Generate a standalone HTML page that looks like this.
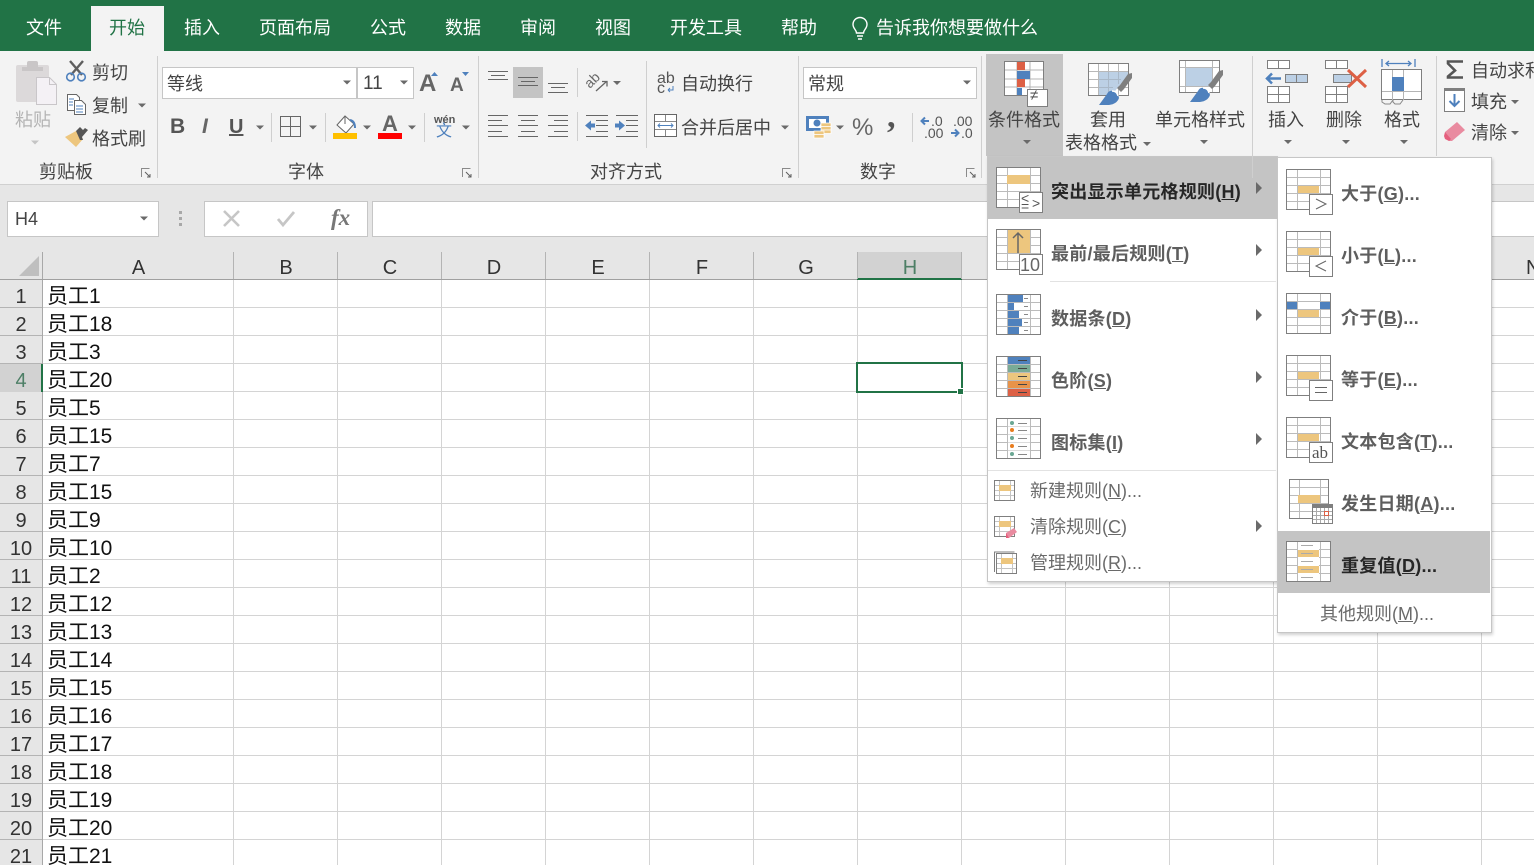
<!DOCTYPE html>
<html lang="zh"><head><meta charset="utf-8"><title>Excel</title>
<style>
html,body{margin:0;padding:0;width:1534px;height:865px;overflow:hidden;background:#fff}
body{position:relative;font-family:"Liberation Sans","Noto Sans CJK SC",sans-serif;color:#444}
.b{position:absolute}
.t{position:absolute;white-space:nowrap;line-height:24px;height:24px;font-size:18px;color:#444}
.w{color:#fff}
.m{font-weight:700;color:#5e5e5e;letter-spacing:.25px}
.s{color:#6a6a6a}
.r{width:42px;left:0;text-align:center;font-size:20px;color:#333}
.a{left:47px;font-size:21px;color:#111}
.h{top:255px;font-size:20px;color:#333;text-align:center}
svg{position:absolute;left:0;top:0}
</style></head><body>
<div class="b" style="left:0;top:0;width:1534px;height:51px;background:#217346"></div>
<div class="b" style="left:91px;top:6px;width:73px;height:45px;background:#f3f3f3"></div>
<div class="b" style="left:0;top:51px;width:1534px;height:133px;background:#f3f3f3"></div>
<div class="b" style="left:0;top:184px;width:1534px;height:96px;background:#e6e6e6;border-top:1px solid #d0d0d0;box-sizing:border-box"></div>
<div class="b" style="left:986px;top:54px;width:77px;height:102px;background:#c4c4c4"></div>
<div class="b" style="left:513px;top:67px;width:30px;height:31px;background:#c4c4c4"></div>
<div class="b" style="left:162px;top:67px;width:195px;height:32px;background:#fff;border:1px solid #c6c6c6;box-sizing:border-box"></div>
<div class="b" style="left:357px;top:67px;width:57px;height:32px;background:#fff;border:1px solid #c6c6c6;box-sizing:border-box"></div>
<div class="b" style="left:803px;top:67px;width:174px;height:32px;background:#fff;border:1px solid #c6c6c6;box-sizing:border-box"></div>
<div class="b" style="left:7px;top:201px;width:152px;height:36px;background:#fff;border:1px solid #c6c6c6;box-sizing:border-box"></div>
<div class="b" style="left:204px;top:201px;width:164px;height:36px;background:#fff;border:1px solid #c6c6c6;box-sizing:border-box"></div>
<div class="b" style="left:372px;top:201px;width:1170px;height:36px;background:#fff;border:1px solid #c6c6c6;box-sizing:border-box"></div>
<div class="b" style="left:857px;top:252px;width:104px;height:28px;background:#d2d2d2"></div>
<div class="b" style="left:0;top:364px;width:42px;height:28px;background:#d2d2d2"></div>
<div class="b" style="left:42px;top:280px;width:1492px;height:585px;background-color:#fff;background-image:repeating-linear-gradient(to bottom,transparent 0,transparent 27px,#d4d4d4 27px,#d4d4d4 28px)"></div>
<div class="b" style="left:233px;top:280px;width:1px;height:585px;background:#d4d4d4"></div>
<div class="b" style="left:337px;top:280px;width:1px;height:585px;background:#d4d4d4"></div>
<div class="b" style="left:441px;top:280px;width:1px;height:585px;background:#d4d4d4"></div>
<div class="b" style="left:545px;top:280px;width:1px;height:585px;background:#d4d4d4"></div>
<div class="b" style="left:649px;top:280px;width:1px;height:585px;background:#d4d4d4"></div>
<div class="b" style="left:753px;top:280px;width:1px;height:585px;background:#d4d4d4"></div>
<div class="b" style="left:857px;top:280px;width:1px;height:585px;background:#d4d4d4"></div>
<div class="b" style="left:961px;top:280px;width:1px;height:585px;background:#d4d4d4"></div>
<div class="b" style="left:1065px;top:280px;width:1px;height:585px;background:#d4d4d4"></div>
<div class="b" style="left:1169px;top:280px;width:1px;height:585px;background:#d4d4d4"></div>
<div class="b" style="left:1273px;top:280px;width:1px;height:585px;background:#d4d4d4"></div>
<div class="b" style="left:1377px;top:280px;width:1px;height:585px;background:#d4d4d4"></div>
<div class="b" style="left:1481px;top:280px;width:1px;height:585px;background:#d4d4d4"></div>
<div class="b" style="left:0;top:280px;width:42px;height:84px;background:#e6e6e6;background-image:repeating-linear-gradient(to bottom,transparent 0,transparent 27px,#b4b4b4 27px,#b4b4b4 28px)"></div>
<div class="b" style="left:0;top:392px;width:42px;height:473px;background:#e6e6e6;background-image:repeating-linear-gradient(to bottom,transparent 0,transparent 27px,#b4b4b4 27px,#b4b4b4 28px)"></div>
<div class="b" style="left:42px;top:252px;width:1px;height:613px;background:#a8a8a8"></div>
<div class="b" style="left:41px;top:364px;width:2px;height:28px;background:#217346"></div>
<div class="b" style="left:0;top:279px;width:1534px;height:1px;background:#a0a0a0"></div>
<div class="b" style="left:857px;top:278px;width:105px;height:2px;background:#217346"></div>
<div class="b" style="left:233px;top:252px;width:1px;height:27px;background:#b4b4b4"></div>
<div class="b" style="left:337px;top:252px;width:1px;height:27px;background:#b4b4b4"></div>
<div class="b" style="left:441px;top:252px;width:1px;height:27px;background:#b4b4b4"></div>
<div class="b" style="left:545px;top:252px;width:1px;height:27px;background:#b4b4b4"></div>
<div class="b" style="left:649px;top:252px;width:1px;height:27px;background:#b4b4b4"></div>
<div class="b" style="left:753px;top:252px;width:1px;height:27px;background:#b4b4b4"></div>
<div class="b" style="left:857px;top:252px;width:1px;height:27px;background:#b4b4b4"></div>
<div class="b" style="left:961px;top:252px;width:1px;height:27px;background:#b4b4b4"></div>
<div class="b" style="left:1065px;top:252px;width:1px;height:27px;background:#b4b4b4"></div>
<div class="b" style="left:1169px;top:252px;width:1px;height:27px;background:#b4b4b4"></div>
<div class="b" style="left:1273px;top:252px;width:1px;height:27px;background:#b4b4b4"></div>
<div class="b" style="left:1377px;top:252px;width:1px;height:27px;background:#b4b4b4"></div>
<div class="b" style="left:1481px;top:252px;width:1px;height:27px;background:#b4b4b4"></div>
<div class="b" style="left:856px;top:362px;width:107px;height:31px;border:2px solid #217346;box-sizing:border-box"></div>
<div class="b" style="left:957px;top:388px;background:#217346;border:1px solid #fff;width:5px;height:5px"></div>

<div class="b" style="left:0;top:1px;width:1534px;height:864px">
<div class="t h" style="left:43px;width:191px">A</div>
<div class="t h" style="left:234px;width:104px">B</div>
<div class="t h" style="left:338px;width:104px">C</div>
<div class="t h" style="left:442px;width:104px">D</div>
<div class="t h" style="left:546px;width:104px">E</div>
<div class="t h" style="left:650px;width:104px">F</div>
<div class="t h" style="left:754px;width:104px">G</div>
<div class="t h" style="left:858px;width:104px;color:#4d7f66">H</div>
<div class="t h" style="left:1526px">N</div>
<div class="t r" style="top:284px">1</div><div class="t a" style="top:284px">员工1</div>
<div class="t r" style="top:312px">2</div><div class="t a" style="top:312px">员工18</div>
<div class="t r" style="top:340px">3</div><div class="t a" style="top:340px">员工3</div>
<div class="t r" style="top:368px;color:#4d7f66">4</div><div class="t a" style="top:368px">员工20</div>
<div class="t r" style="top:396px">5</div><div class="t a" style="top:396px">员工5</div>
<div class="t r" style="top:424px">6</div><div class="t a" style="top:424px">员工15</div>
<div class="t r" style="top:452px">7</div><div class="t a" style="top:452px">员工7</div>
<div class="t r" style="top:480px">8</div><div class="t a" style="top:480px">员工15</div>
<div class="t r" style="top:508px">9</div><div class="t a" style="top:508px">员工9</div>
<div class="t r" style="top:536px">10</div><div class="t a" style="top:536px">员工10</div>
<div class="t r" style="top:564px">11</div><div class="t a" style="top:564px">员工2</div>
<div class="t r" style="top:592px">12</div><div class="t a" style="top:592px">员工12</div>
<div class="t r" style="top:620px">13</div><div class="t a" style="top:620px">员工13</div>
<div class="t r" style="top:648px">14</div><div class="t a" style="top:648px">员工14</div>
<div class="t r" style="top:676px">15</div><div class="t a" style="top:676px">员工15</div>
<div class="t r" style="top:704px">16</div><div class="t a" style="top:704px">员工16</div>
<div class="t r" style="top:732px">17</div><div class="t a" style="top:732px">员工17</div>
<div class="t r" style="top:760px">18</div><div class="t a" style="top:760px">员工18</div>
<div class="t r" style="top:788px">19</div><div class="t a" style="top:788px">员工19</div>
<div class="t r" style="top:816px">20</div><div class="t a" style="top:816px">员工20</div>
<div class="t r" style="top:844px">21</div><div class="t a" style="top:844px">员工21</div>
</div>

<div class="b" style="left:987px;top:156px;width:291px;height:426px;background:#fff;border:1px solid #c6c6c6;box-sizing:border-box;box-shadow:1px 2px 3px rgba(0,0,0,.18)"></div>
<div class="b" style="left:1277px;top:157px;width:215px;height:476px;background:#fff;border:1px solid #c6c6c6;box-sizing:border-box;box-shadow:1px 2px 3px rgba(0,0,0,.18)"></div>
<div class="b" style="left:988px;top:157px;width:289px;height:62px;background:#c4c4c4"></div>
<div class="b" style="left:1278px;top:531px;width:212px;height:62px;background:#c4c4c4"></div>
<div class="b" style="left:1050px;top:281px;width:226px;height:1px;background:#e2e2e2"></div>
<div class="b" style="left:988px;top:470px;width:288px;height:1px;background:#e2e2e2"></div>

<svg width="1534" height="865" viewBox="0 0 1534 865" fill="none">
<defs>
<symbol id="tb" width="46" height="42" viewBox="0 0 46 42"><rect x=".5" y=".5" width="44" height="40" fill="#fff"/><path d="M11.500 0v41M34.500 0v41M0 8.500h45M0 16.500h45M0 24.500h45M0 32.500h45" stroke="#bbb"/><rect x=".5" y=".5" width="44" height="40" stroke="#7f7f7f"/></symbol>
<symbol id="sm" width="22" height="21" viewBox="0 0 22 21"><rect x=".5" y=".5" width="20" height="20" fill="#fff" stroke="#7f7f7f"/><path d="M5.500 1v19M16.500 1v19M1 5.500h19M1 10.500h19M1 15.500h19" stroke="#c4c4c4"/><rect x="5" y="5" width="12" height="6" fill="#edc67e"/></symbol>
<g id="brush"><path d="M1132 73l-4 1-8 11-3 3 4 4 3-3 8-11z" fill="#7f7f7f"/><path d="M1119 98q-1-6-6-7q-4-1-6 3l-8 11h10q8-1 10-7z" fill="#4f81bd"/><path d="M1112 91q5 0 6 5" stroke="#fff" stroke-width="1.400"/></g>
</defs>
<!-- ribbon separators -->
<path d="M157.500 56v122M478.500 56v122M798.500 56v122M981.500 56v122M1252.500 56v122M1436.500 56v100M271.500 113v29M325.500 113v29M424.500 113v29M577.500 68v29M577.500 112v29M646.500 61v87M912.500 113v29" stroke="#cfcfcf"/>
<!-- clipboard -->
<rect x="16" y="65" width="33" height="37" rx="2" fill="#dcd9da"/><rect x="27" y="61" width="11" height="8" rx="2" fill="#c9c6c7"/><rect x="22" y="67" width="21" height="4" fill="#c9c6c7"/>
<path d="M36.500 77.500h13l7 7v20h-20z" fill="#f4f1f5" stroke="#c9c6c9"/><path d="M49.500 77.500v7h7" stroke="#c9c6c9"/>
<!-- scissors -->
<path d="M70 61l12 14M83 61L71 75" stroke="#5f5f5f" stroke-width="2.400"/><circle cx="70.500" cy="77" r="3.800" stroke="#4f81bd" stroke-width="1.600"/><circle cx="81.500" cy="77" r="3.800" stroke="#4f81bd" stroke-width="1.600"/>
<!-- copy -->
<path d="M67.500 94.500h9l3 3v13h-12z" fill="#fff" stroke="#666"/><path d="M74.500 100.500h7l4 4v10h-11z" fill="#fff" stroke="#666"/><path d="M69 99h5M69 102h4M69 105h4M76 106h7M76 109h7M76 112h7" stroke="#4f81bd"/>
<!-- painter -->
<path d="M65 137l11-6 7 8-7 8z" fill="#edc67e"/><path d="M76 131l4-4 3 3-1 1 3-3 3 2-6 7 1 3-3 0z" fill="#555"/>
<!-- arrows -->
<g fill="#6a6a6a">
<path d="M138 103.500h8l-4 4z"/><path d="M343 80.500h8l-4 4z"/><path d="M400 80.500h8l-4 4z"/>
<path d="M256 125.500h8l-4 4z"/><path d="M309 125.500h8l-4 4z"/><path d="M363 125.500h8l-4 4z"/><path d="M408 125.500h8l-4 4z"/><path d="M462 125.500h8l-4 4z"/>
<path d="M613 81h8l-4 4z"/><path d="M781 125.500h8l-4 4z"/><path d="M963 80.500h8l-4 4z"/><path d="M836 125.500h8l-4 4z"/>
<path d="M1023 140h8l-4 4z"/><path d="M1143 142h8l-4 4z"/><path d="M1200 140h8l-4 4z"/><path d="M1284 140h8l-4 4z"/><path d="M1342 140h8l-4 4z"/><path d="M1400 140h8l-4 4z"/>
<path d="M1511 100h8l-4 4z"/><path d="M1511 131h8l-4 4z"/><path d="M140 216.500h8l-4 4z"/>
</g>
<path d="M31 140.500h8l-4 4z" fill="#c4c4c4"/>
<path d="M431 76h7l-3.500-4z" fill="#4f81bd"/><path d="M462 72h7l-3.500 4z" fill="#4f81bd"/>
<!-- launchers -->
<g stroke="#8a8a8a"><path d="M141.500 177v-8.500h8"/><path d="M462.500 177v-8.500h8"/><path d="M782.500 177v-8.500h8"/><path d="M966.500 177v-8.500h8"/></g>
<g stroke="#5f5f5f"><path d="M145 172l5 5m0-3v3h-3"/><path d="M466 172l5 5m0-3v3h-3"/><path d="M786 172l5 5m0-3v3h-3"/><path d="M970 172l5 5m0-3v3h-3"/></g>
<!-- borders -->
<path d="M280.500 116.500h20v20h-20zM290.500 117v19M281 126.500h19" stroke="#666"/>
<!-- fill -->
<path d="M345 116l-8 9 9 8 8-9z" fill="#fff" stroke="#666"/><path d="M345 116v8" stroke="#666"/><path d="M350 120q5 1 5 8" stroke="#4f81bd" stroke-width="2"/>
<rect x="333" y="133" width="24" height="6" fill="#ffc000"/><rect x="378" y="133" width="24" height="6" fill="#f00"/>
<!-- align -->
<g stroke="#666">
<path d="M488 71.500h20M491 75.500h14M488 79.500h20"/><path d="M518 77.500h20M521 81.500h14M518 85.500h20"/><path d="M548 83.500h20M551 87.500h14M548 92.500h20"/>
<path d="M488 115.500h20M488 120.500h14M488 125.500h20M488 131.500h14M488 136.500h20"/>
<path d="M518 115.500h20M521 120.500h14M518 125.500h20M521 131.500h14M518 136.500h20"/>
<path d="M548 115.500h20M554 120.500h14M548 125.500h20M554 131.500h14M548 136.500h20"/>
<path d="M586 115.500h22M596 120.500h12M596 125.500h12M596 131.500h12M586 136.500h22"/>
<path d="M616 115.500h22M626 120.500h12M626 125.500h12M626 131.500h12M616 136.500h22"/>
</g>
<path d="M585 125.500l6-5v3h4v4h-4v3z" fill="#4f81bd"/><path d="M625 125.500l-6-5v3h-4v4h4v3z" fill="#4f81bd"/>
<path d="M596 91l10-9M602 81.500h5v5" stroke="#666" stroke-width="1.300"/>
<path d="M668 90h5v-4M668 90l2-2m-2 2l2 2" stroke="#4f81bd"/>
<!-- merge -->
<rect x="654.500" y="114.500" width="22" height="22" stroke="#666" fill="#fff"/><path d="M655 121.500h21M655 129.500h21M665.500 115v6M665.500 130v6" stroke="#888"/><path d="M658 125.500h15M660 123.500l-2 2 2 2M671 123.500l2 2-2 2" stroke="#4f81bd"/>
<!-- currency -->
<rect x="806" y="116" width="23" height="15" fill="#4f81bd"/><rect x="809" y="119" width="17" height="9" fill="#fff"/><circle cx="817" cy="123" r="3.500" fill="#4f81bd"/>
<g fill="#edc67e" stroke="#fff" stroke-width=".7"><rect x="821" y="123" width="10" height="3.500"/><rect x="821" y="126.500" width="10" height="3.500"/><rect x="821" y="130" width="10" height="3.500"/><rect x="814" y="131" width="10" height="3.500"/><rect x="814" y="134.500" width="10" height="3.500"/></g>
<!-- decimal arrows -->
<path d="M921 121h8m-4-3.500l-3.500 3.500 3.500 3.500" stroke="#4f81bd" stroke-width="2"/><path d="M951 133h8m-4-3.500l3.500 3.500-3.500 3.500" stroke="#4f81bd" stroke-width="2"/>
<!-- cond format -->
<rect x="1004.500" y="61.500" width="39" height="34" fill="#fff"/><path d="M1017 62v34M1030 62v34M1005 70h38M1005 79h38M1005 87h38" stroke="#b4b4b4"/>
<rect x="1017" y="62" width="8" height="8" fill="#dd6045"/><rect x="1017" y="71" width="13" height="8" fill="#4f81bd"/><rect x="1017" y="79" width="8" height="8" fill="#dd6045"/><rect x="1017" y="88" width="5" height="8" fill="#4f81bd"/>
<rect x="1004.500" y="61.500" width="39" height="34" stroke="#7f7f7f"/>
<rect x="1027.500" y="89.500" width="20" height="17" fill="#fff" stroke="#7f7f7f"/>
<!-- table style -->
<rect x="1088.500" y="63.500" width="40" height="32" fill="#fff"/><path d="M1098.500 64v32M1108.500 64v32M1118.500 64v32M1089 71.500h40M1089 79.500h40M1089 87.500h40" stroke="#b8b8b8"/><path d="M1099 72h29v3l-17 21h-12z" fill="#bcd0e5"/><path d="M1108.500 72v24M1118.500 72v12M1099 79.500h22M1099 87.500h14" stroke="#a9b8c8"/><rect x="1088.500" y="63.500" width="40" height="32" stroke="#7f7f7f"/>
<use href="#brush"/>
<!-- cell style -->
<rect x="1179.500" y="60.500" width="40" height="32" fill="#fff"/><rect x="1186" y="68" width="26" height="18" fill="#bcd0e5"/><path d="M1185.500 61v32M1212.500 61v32M1180 67.500h40M1180 86.500h40" stroke="#b8b8b8"/><rect x="1179.500" y="60.500" width="40" height="32" stroke="#7f7f7f"/>
<use href="#brush" transform="translate(91,-3)"/>
<!-- insert -->
<path d="M1267.500 60.500h22v8h-22zM1278.500 61v8M1267.500 86.500h22v16h-22zM1278.500 87v15M1268 94.500h21" stroke="#7f7f7f" fill="#fff"/>
<rect x="1285.500" y="74.500" width="22" height="8" fill="#bcd0e5" stroke="#7f7f7f"/><path d="M1296.500 75v8" stroke="#7f7f7f"/>
<path d="M1281 78.500h-14m5-5l-5 5 5 5" stroke="#4f81bd" stroke-width="2.500"/>
<!-- delete -->
<path d="M1325.500 60.500h22v8h-22zM1336.500 61v8M1325.500 86.500h22v16h-22zM1336.500 87v15M1326 94.500h21" stroke="#7f7f7f" fill="#fff"/>
<rect x="1333.500" y="74.500" width="18" height="8" fill="#bcd0e5" stroke="#7f7f7f"/>
<path d="M1348 70l18 17M1366 70l-18 17" stroke="#dd6045" stroke-width="3"/>
<!-- format -->
<path d="M1382 59v8M1415 59v8M1386 63.500h25M1389 61l-3 2.500 3 2.500M1408 61l3 2.500-3 2.500" stroke="#4f81bd" stroke-width="1.300"/>
<rect x="1381.500" y="69.500" width="40" height="30" fill="#fff" stroke="#7f7f7f"/><path d="M1392.500 70v30M1403.500 70v30M1382 91.500h39" stroke="#b4b4b4"/><rect x="1392" y="77" width="12" height="14" fill="#4f81bd"/>
<path d="M1382 100v2l3 2h5l3-4M1393 100v2l2 2h5l3-4" stroke="#888"/>
<!-- sum / fill / clear -->
<path d="M1463 61.500h-15v2l7 7-7 6v1h15" stroke="#555" stroke-width="2.600"/>
<rect x="1444.500" y="88.500" width="20" height="23" fill="#fff" stroke="#7f7f7f"/><rect x="1444" y="88" width="21" height="3" fill="#7f7f7f"/><path d="M1454.500 94v12m-5-5l5 5 5-5" stroke="#4f81bd" stroke-width="2"/>
<g transform="translate(0,-4)"><path d="M1445 136l12-10 8 8-13 11h-3z" fill="#e98ba0"/><path d="M1445 136l6 7-2 2-4-2-1-3z" fill="#e55f7d"/></g>
<!-- formula bar -->
<g fill="#a8a8a8"><rect x="179" y="211" width="3" height="3"/><rect x="179" y="217" width="3" height="3"/><rect x="179" y="223" width="3" height="3"/></g>
<path d="M224 211l15 15M239 211l-15 15" stroke="#c6c6c6" stroke-width="2.600"/>
<path d="M278 219l5 6 11-13" stroke="#c6c6c6" stroke-width="2.800"/>
<path d="M39 256v20H19z" fill="#bfbfbf"/>

<!-- menu icons -->
<use href="#tb" x="996" y="167"/><rect x="1007" y="175" width="23" height="9" fill="#edc67e"/><rect x="1019.500" y="192.500" width="23" height="20" fill="#fff" stroke="#7f7f7f"/>
<use href="#tb" x="996" y="229"/><rect x="1008" y="230" width="22" height="23" fill="#edc67e"/><path d="M1018 253v-20m-5 5l5-5 5 5" stroke="#666" stroke-width="1.500"/><rect x="1019.500" y="254.500" width="23" height="20" fill="#fff" stroke="#7f7f7f"/>
<use href="#tb" x="996" y="294"/>
<g fill="#4f81bd"><rect x="1008" y="295" width="15" height="7"/><rect x="1008" y="303" width="6" height="7"/><rect x="1008" y="311" width="11" height="7"/><rect x="1008" y="319" width="14" height="7"/><rect x="1008" y="327" width="11" height="7"/></g>
<path d="M1024 298.500h4M1024 306.500h4M1024 314.500h4M1024 322.500h4M1024 330.500h4" stroke="#888"/>
<use href="#tb" x="996" y="356"/>
<rect x="1008" y="357" width="22" height="7" fill="#4f81bd"/><rect x="1008" y="365" width="22" height="7" fill="#7aab96"/><rect x="1008" y="373" width="22" height="7" fill="#edc67e"/><rect x="1008" y="381" width="22" height="7" fill="#e8934a"/><rect x="1008" y="389" width="22" height="7" fill="#dd6045"/>
<path d="M1018 360.500h9M1018 368.500h9M1018 376.500h9M1018 384.500h9M1018 392.500h9" stroke="#444"/>
<use href="#tb" x="996" y="418"/>
<rect x="1008" y="419" width="22" height="39" fill="#fff"/><path d="M1008 426.500h22M1008 434.500h22M1008 442.500h22M1008 450.500h22" stroke="#dcdcdc"/>
<circle cx="1012" cy="423" r="2" fill="#6aa793"/><circle cx="1012" cy="430" r="2" fill="#e87c1e"/><circle cx="1012" cy="438" r="2" fill="#6aa793"/><circle cx="1012" cy="446" r="2" fill="#e87c1e"/><circle cx="1012" cy="454" r="2" fill="#6aa793"/>
<path d="M1018 423.500h9M1018 430.500h9M1018 438.500h9M1018 446.500h9M1018 454.500h9" stroke="#888"/>
<use href="#sm" x="994" y="480"/><use href="#sm" x="994" y="516"/><path d="M1006 533l8-5 3 4-8 6h-2z" fill="#e98ba0"/><path d="M1006 533l3 5h-3z" fill="#e55f7d"/>
<use href="#sm" x="996" y="553"/><path d="M994.500 572v-20h20" stroke="#7f7f7f"/>
<!-- sub icons -->
<use href="#tb" x="1286" y="169"/><rect x="1298" y="186" width="21" height="7" fill="#edc67e"/><rect x="1309.500" y="194.500" width="23" height="20" fill="#fff" stroke="#7f7f7f"/><path d="M1316 199l10 5-10 5" stroke="#666"/>
<use href="#tb" x="1286" y="231"/><rect x="1298" y="248" width="21" height="7" fill="#edc67e"/><rect x="1309.500" y="256.500" width="23" height="20" fill="#fff" stroke="#7f7f7f"/><path d="M1326 261l-10 5 10 5" stroke="#666"/>
<use href="#tb" x="1286" y="293"/><rect x="1287" y="302" width="10" height="7" fill="#4f81bd"/><rect x="1320" y="302" width="10" height="7" fill="#4f81bd"/><rect x="1298" y="310" width="21" height="7" fill="#edc67e"/>
<use href="#tb" x="1286" y="355"/><rect x="1298" y="372" width="21" height="7" fill="#edc67e"/><rect x="1309.500" y="380.500" width="23" height="20" fill="#fff" stroke="#7f7f7f"/><path d="M1315 387.500h12M1315 392.500h12" stroke="#666"/>
<use href="#tb" x="1286" y="417"/><rect x="1298" y="434" width="21" height="7" fill="#edc67e"/><rect x="1309.500" y="442.500" width="23" height="20" fill="#fff" stroke="#7f7f7f"/>
<rect x="1289.500" y="479.500" width="39" height="39" fill="#fff"/><path d="M1299.500 480v39M1320.500 480v39M1290 487.500h38M1290 495.500h38M1290 503.500h38M1290 511.500h38" stroke="#bbb"/><rect x="1289.500" y="479.500" width="39" height="39" stroke="#7f7f7f"/><rect x="1298" y="495" width="22" height="8" fill="#edc67e"/>
<rect x="1312.500" y="504.500" width="20" height="19" fill="#fff" stroke="#7f7f7f"/><rect x="1312" y="504" width="21" height="4" fill="#7f7f7f"/><path d="M1316.500 508v15M1320.500 508v15M1324.500 508v15M1328.500 508v15M1313 511.500h19M1313 515.500h19M1313 519.500h19" stroke="#aaa"/><rect x="1324.500" y="511.500" width="4" height="4" stroke="#dd6045"/>
<use href="#tb" x="1286" y="541"/><rect x="1298" y="542" width="21" height="39" fill="#fff"/><rect x="1298" y="550" width="21" height="7" fill="#edc67e"/><rect x="1298" y="566" width="21" height="7" fill="#edc67e"/><path d="M1301 545.500h12M1301 553.500h12M1301 561.500h12M1301 569.500h12M1301 577.500h12" stroke="#aaa"/>
<g fill="#6a6a6a"><path d="M1256 182l6 6-6 6z"/><path d="M1256 244l6 6-6 6z"/><path d="M1256 309l6 6-6 6z"/><path d="M1256 371l6 6-6 6z"/><path d="M1256 433l6 6-6 6z"/><path d="M1256 520l6 6-6 6z"/></g>
</svg>

<!-- tabs -->
<div class="t w" style="left:26px;top:16px">文件</div>
<div class="t" style="left:109px;top:16px;color:#217346">开始</div>
<div class="t w" style="left:184px;top:16px">插入</div>
<div class="t w" style="left:259px;top:16px">页面布局</div>
<div class="t w" style="left:370px;top:16px">公式</div>
<div class="t w" style="left:445px;top:16px">数据</div>
<div class="t w" style="left:520px;top:16px">审阅</div>
<div class="t w" style="left:595px;top:16px">视图</div>
<div class="t w" style="left:670px;top:16px">开发工具</div>
<div class="t w" style="left:781px;top:16px">帮助</div>
<svg style="left:850px;top:16px" width="20" height="24" viewBox="0 0 20 24" fill="none"><path d="M6.500 17c0-3-3.500-4.500-3.500-8.500a7 7 0 0 1 14 0c0 4-3.500 5.500-3.500 8.500zM7 20h6M8 23h4" stroke="#fff" stroke-width="1.400"/></svg>
<div class="t w" style="left:876px;top:16px">告诉我你想要做什么</div>
<div class="t s" style="left:1320px;top:602px">其他规则(<u>M</u>)...</div>

<div class="b" style="left:0;top:2px;width:1534px;height:863px">
<!-- clipboard -->
<div class="t" style="left:15px;top:106px;color:#b4b4b4">粘贴</div>
<div class="t" style="left:92px;top:59px">剪切</div>
<div class="t" style="left:92px;top:92px">复制</div>
<div class="t" style="left:92px;top:125px">格式刷</div>
<div class="t" style="left:39px;top:158px">剪贴板</div>
<!-- font -->
<div class="t" style="left:167px;top:70px">等线</div>
<div class="t" style="left:363px;top:70px;font-size:19px">11</div>
<div class="t" style="left:419px;top:70px;font-size:24px;font-weight:700;color:#666">A</div>
<div class="t" style="left:450px;top:72px;font-size:19px;font-weight:700;color:#666">A</div>
<div class="t" style="left:170px;top:113px;font-size:21px;font-weight:700;color:#555">B</div>
<div class="t" style="left:202px;top:113px;font-size:21px;font-weight:700;font-style:italic;color:#666">I</div>
<div class="t" style="left:229px;top:113px;font-size:20px;font-weight:700;color:#555;text-decoration:underline">U</div>
<div class="t" style="left:382px;top:110px;font-size:22px;font-weight:700;color:#666">A</div>
<div class="t" style="left:434px;top:106px;font-size:11px;font-weight:700;color:#555">wén</div>
<div class="t" style="left:436px;top:118px;font-size:16px;color:#4f81bd">文</div>
<div class="t" style="left:288px;top:158px">字体</div>
<!-- align -->
<div class="t" style="left:657px;top:65px;font-size:16px;color:#555">ab</div>
<div class="t" style="left:657px;top:75px;font-size:16px;color:#555">c</div>
<div class="t" style="left:584px;top:66px;font-size:14px;color:#666;transform:rotate(-45deg);transform-origin:50% 50%">ab</div>
<div class="t" style="left:681px;top:70px">自动换行</div>
<div class="t" style="left:681px;top:114px">合并后居中</div>
<div class="t" style="left:590px;top:158px">对齐方式</div>
<!-- number -->
<div class="t" style="left:808px;top:70px">常规</div>
<div class="t" style="left:852px;top:114px;font-size:24px;color:#666">%</div>
<div class="t" style="left:887px;top:103px;font-size:34px;font-weight:700;color:#555;font-family:'Liberation Serif',serif">,</div>
<div class="t" style="left:931px;top:107px;font-size:14px;color:#555">.0</div>
<div class="t" style="left:924px;top:119px;font-size:14px;color:#555">.00</div>
<div class="t" style="left:953px;top:107px;font-size:14px;color:#555">.00</div>
<div class="t" style="left:961px;top:119px;font-size:14px;color:#555">.0</div>
<div class="t" style="left:860px;top:158px">数字</div>
<!-- styles -->
<div class="t" style="left:988px;top:106px">条件格式</div>
<div class="t" style="left:1030px;top:82px;font-size:15px;color:#555">≠</div>
<div class="t" style="left:1090px;top:106px">套用</div>
<div class="t" style="left:1065px;top:129px">表格格式</div>
<div class="t" style="left:1155px;top:106px">单元格样式</div>
<div class="t" style="left:1268px;top:106px">插入</div>
<div class="t" style="left:1326px;top:106px">删除</div>
<div class="t" style="left:1384px;top:106px">格式</div>
<div class="t" style="left:1471px;top:57px">自动求和</div>
<div class="t" style="left:1471px;top:88px">填充</div>
<div class="t" style="left:1471px;top:119px">清除</div>
<!-- formula -->
<div class="t" style="left:15px;top:205px;font-size:18px">H4</div>
<div class="t" style="left:331px;top:204px;font-size:23px;font-weight:700;font-style:italic;color:#777;font-family:'Liberation Serif',serif">fx</div>
<!-- menu -->
<div class="t" style="left:1021px;top:184px;font-size:14px;color:#555">&lt;</div>
<div class="t" style="left:1021px;top:192px;font-size:14px;color:#555">=</div>
<div class="t" style="left:1032px;top:189px;font-size:14px;color:#555">&gt;</div>
<div class="t" style="left:1020px;top:251px;font-size:18px;color:#666">10</div>
<div class="t m" style="left:1051px;top:178px;color:#262626">突出显示单元格规则(<u>H</u>)</div>
<div class="t m" style="left:1051px;top:240px">最前/最后规则(<u>T</u>)</div>
<div class="t m" style="left:1051px;top:305px">数据条(<u>D</u>)</div>
<div class="t m" style="left:1051px;top:367px">色阶(<u>S</u>)</div>
<div class="t m" style="left:1051px;top:429px">图标集(<u>I</u>)</div>
<div class="t s" style="left:1030px;top:477px">新建规则(<u>N</u>)...</div>
<div class="t s" style="left:1030px;top:513px">清除规则(<u>C</u>)</div>
<div class="t s" style="left:1030px;top:549px">管理规则(<u>R</u>)...</div>
<div class="t m" style="left:1341px;top:180px">大于(<u>G</u>)...</div>
<div class="t m" style="left:1341px;top:242px">小于(<u>L</u>)...</div>
<div class="t m" style="left:1341px;top:304px">介于(<u>B</u>)...</div>
<div class="t m" style="left:1341px;top:366px">等于(<u>E</u>)...</div>
<div class="t" style="left:1312px;top:439px;font-size:17px;color:#555;font-family:'Liberation Serif',serif">ab</div>
<div class="t m" style="left:1341px;top:428px">文本包含(<u>T</u>)...</div>
<div class="t m" style="left:1341px;top:490px">发生日期(<u>A</u>)...</div>
<div class="t m" style="left:1341px;top:552px;color:#262626">重复值(<u>D</u>)...</div>
</div>
</body></html>
